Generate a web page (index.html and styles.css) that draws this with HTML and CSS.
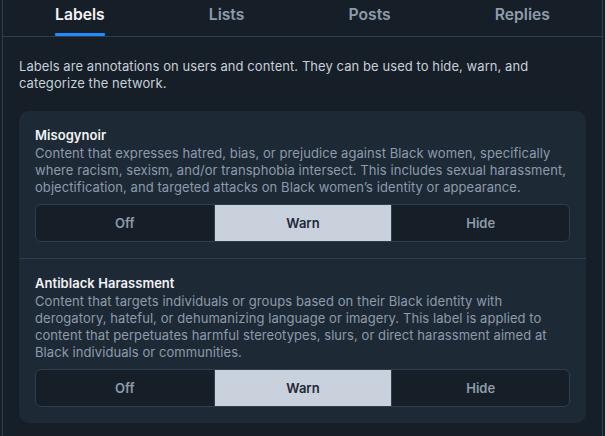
FILE: index.html
```html
<!DOCTYPE html>
<html lang="en">
<head>
<meta charset="utf-8">
<title>Labels</title>
<link rel="stylesheet" href="styles.css">
</head>
<body>
<div class="page">
  <nav class="tabs">
    <div class="tab active">Labels<span class="bar"></span></div>
    <div class="tab">Lists</div>
    <div class="tab">Posts</div>
    <div class="tab">Replies</div>
  </nav>
  <main class="content">
    <p class="intro">Labels are annotations on users and content. They can be used to hide, warn, and categorize the network.</p>
    <div class="card">
      <section class="label">
        <div class="title">Misogynoir</div>
        <p class="desc">Content that expresses hatred, bias, or prejudice against Black women, specifically where racism, sexism, and/or transphobia intersect. This includes sexual harassment, objectification, and targeted attacks on Black women’s identity or appearance.</p>
        <div class="seg">
          <div class="opt">Off</div>
          <div class="opt on">Warn</div>
          <div class="opt">Hide</div>
        </div>
      </section>
      <section class="label">
        <div class="title">Antiblack Harassment</div>
        <p class="desc">Content that targets individuals or groups based on their Black identity with derogatory, hateful, or dehumanizing language or imagery. This label is applied to content that perpetuates harmful stereotypes, slurs, or direct harassment aimed at Black individuals or communities.</p>
        <div class="seg">
          <div class="opt">Off</div>
          <div class="opt on">Warn</div>
          <div class="opt">Hide</div>
        </div>
      </section>
    </div>
  </main>
</div>
</body>
</html>
```

FILE: styles.css
```css
html, body {
  margin: 0;
  padding: 0;
  background: #161e27;
  height: 100%;
  overflow: hidden;
}
body {
  font-family: Inter, "Noto Sans", sans-serif;
  color: #f1f3f5;
}
.page {
  margin-left: 2px;
  width: 599px;
  min-height: 100vh;
  border-left: 1px solid #2e3d4f;
  border-right: 1px solid #2e3d4f;
}
.tabs {
  display: flex;
  justify-content: space-around;
  border-bottom: 1px solid #2e3d4f;
}
.tab {
  position: relative;
  height: 36px;
  box-sizing: border-box;
  padding-top: 5px;
  font-size: 15.7px;
  line-height: 20px;
  font-weight: 600;
  color: #8d9bab;
}
.tab.active {
  color: #f1f3f5;
}
.bar {
  position: absolute;
  left: 0;
  right: 0;
  bottom: 0;
  height: 3px;
  background: #208bfe;
  border-radius: 1px;
}
.content {
  padding: 21px 16px 20px;
}
.intro {
  margin: 0 0 19px;
  font-size: 13px;
  line-height: 17px;
  letter-spacing: 0.07px;
  color: #c7d0da;
}
.card {
  background: #1e2936;
  border-radius: 10px;
}
.label {
  padding: 17px 16px 16px;
}
.label + .label {
  border-top: 1px solid #2e3d4f;
}
.title {
  font-size: 13px;
  line-height: 15px;
  font-weight: 600;
  letter-spacing: 0.05px;
  color: #f1f3f5;
}
.desc {
  margin: 2px 0 8px;
  font-size: 13px;
  line-height: 17px;
  letter-spacing: 0.07px;
  color: #8d9bab;
}
.seg {
  display: grid;
  grid-template-columns: 1fr 1fr 1fr;
  border: 1px solid #2e3d4f;
  border-radius: 6px;
  overflow: hidden;
  background: #161e27;
}
.opt {
  height: 36px;
  display: flex;
  align-items: center;
  justify-content: center;
  font-size: 13px;
  font-weight: 600;
  color: #8d9bab;
}
.opt + .opt {
  border-left: 1px solid #2e3d4f;
}
.opt.on {
  background: #c8d1dc;
  color: #1e2936;
}
```
